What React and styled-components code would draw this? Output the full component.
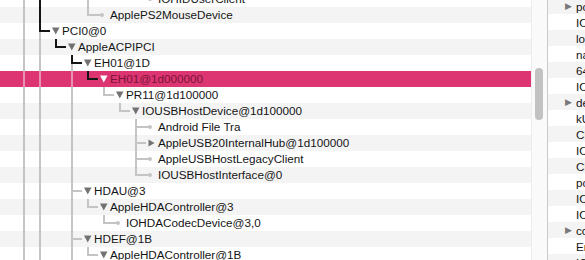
import React from "react";
import styled, { createGlobalStyle } from "styled-components";

const G = "#c4c4c4";
const K = "#151515";

const rows = [
  { level: 7, label: "IOHIDUserClient", kind: "leaf", pass: [[0, G], [1, K], [4, G]] },
  { level: 4, label: "ApplePS2MouseDevice", kind: "leaf", pass: [[0, G], [1, K]] },
  { level: 1, label: "PCI0@0", kind: "open", elbow: K, tail: G, pass: [[0, G]] },
  { level: 2, label: "AppleACPIPCI", kind: "open", elbow: K, pass: [[0, G], [1, G]] },
  { level: 3, label: "EH01@1D", kind: "open", elbow: K, tail: G, pass: [[0, G], [1, G]] },
  { level: 4, label: "EH01@1d000000", kind: "open", elbow: K, selected: true, pass: [[0, G], [1, G], [3, G]] },
  { level: 5, label: "PR11@1d100000", kind: "open", pass: [[0, G], [1, G], [3, G]] },
  { level: 6, label: "IOUSBHostDevice@1d100000", kind: "open", pass: [[0, G], [1, G], [3, G]] },
  { level: 7, label: "Android File Tra", kind: "leaf", tail: G, pass: [[0, G], [1, G], [3, G]] },
  { level: 7, label: "AppleUSB20InternalHub@1d100000", kind: "closed", tail: G, pass: [[0, G], [1, G], [3, G]] },
  { level: 7, label: "AppleUSBHostLegacyClient", kind: "leaf", tail: G, pass: [[0, G], [1, G], [3, G]] },
  { level: 7, label: "IOUSBHostInterface@0", kind: "leaf", pass: [[0, G], [1, G], [3, G]] },
  { level: 3, label: "HDAU@3", kind: "open", tail: G, pass: [[0, G], [1, G]] },
  { level: 4, label: "AppleHDAController@3", kind: "open", pass: [[0, G], [1, G], [3, G]] },
  { level: 5, label: "IOHDACodecDevice@3,0", kind: "leaf", pass: [[0, G], [1, G], [3, G]] },
  { level: 3, label: "HDEF@1B", kind: "open", tail: G, pass: [[0, G], [1, G]] },
  { level: 4, label: "AppleHDAController@1B", kind: "open", pass: [[0, G], [1, G], [3, G]] },
];

const props = [
  { label: "pool-size", group: true },
  { label: "IOClass" },
  { label: "locationID" },
  { label: "name" },
  { label: "64bit" },
  { label: "IOProviderClass" },
  { label: "device-properties", group: true },
  { label: "kUSBSleepPortCurrentLimit" },
  { label: "Class" },
  { label: "IOName" },
  { label: "ClassCode" },
  { label: "port-count" },
  { label: "IOPowerManagement" },
  { label: "IOGeneralInterest" },
  { label: "controller-statistics", group: true },
  { label: "Endpoints" },
  { label: "IOMatchCategory" },
];

const GlobalStyle = createGlobalStyle`
  html, body {
    margin: 0;
    padding: 0;
    background: #fff;
    overflow: hidden;
  }
  body {
    font-family: "Liberation Sans", Arial, sans-serif;
  }
`;

const Window = styled.div`
  display: flex;
  width: 585px;
  height: 260px;
  overflow: hidden;
  background: #fff;
`;

const Outline = styled.div`
  width: 531px;
  flex: none;
  overflow: hidden;
`;

const List = styled.div`
  margin-top: ${(p) => p.$offset}px;
`;

const TreeRow = styled.div`
  display: flex;
  align-items: center;
  height: 16px;
  background: ${(p) => (p.$selected ? "#dd3572" : p.$stripe ? "#f4f4f4" : "#fff")};
  color: ${(p) => (p.$selected ? "#7a1436" : "#141414")};
  font-size: 11.7px;
  white-space: nowrap;
`;

const Label = styled.span`
  line-height: 16px;
`;

const Scroller = styled.div`
  width: 16px;
  flex: none;
  background: #fafafa;
  border-left: 1px solid #ececec;
  box-sizing: border-box;
  padding: 68px 0 0 3px;
`;

const Thumb = styled.div`
  width: 8px;
  height: 52px;
  border-radius: 4px;
  background: #c2c2c2;
`;

const Inspector = styled.div`
  flex: 1;
  border-left: 1px solid #c9c9c9;
  overflow: hidden;
`;

const PropRow = styled.div`
  display: flex;
  align-items: center;
  height: 16px;
  padding-left: 17px;
  background: ${(p) => (p.$stripe ? "#f4f4f4" : "#fff")};
  color: #141414;
  font-size: 11.7px;
  white-space: nowrap;
`;

const Disclosure = styled.span`
  width: 11px;
  flex: none;
  color: #7a7a7a;
  font-size: 9px;
`;

const lx = (l) => 24 + 16 * l;

function Guides({ row }) {
  const { level, kind, pass, elbow = G, tail, selected } = row;
  const x = lx(level);
  const width = x + 22;
  const soft = (c) => (selected && c === G ? "rgba(255,255,255,0.45)" : c);
  const arm = kind === "leaf" ? 13 : 10;
  const tri = selected ? "#fff" : "#727272";
  return (
    <svg width={width} height="16" style={{ flex: "none" }}>
      {pass.map(([l, c]) => (
        <rect key={l} x={lx(l) - 1} y="0" width="2" height="16" fill={soft(c)} />
      ))}
      {tail && <rect x={x - 1} y="8" width="2" height="8" fill={soft(tail)} />}
      <rect x={x - 1} y="0" width="2" height="9" fill={elbow} />
      <rect x={x - 1} y="7" width={arm + 1} height="2" fill={elbow} />
      {kind === "leaf" && <circle cx={x + 14} cy="8" r="2" fill={elbow} />}
      {kind === "open" && (
        <polygon points={`${x + 12},4.5 ${x + 19.5},4.5 ${x + 15.75},11.5`} fill={tri} />
      )}
      {kind === "closed" && (
        <polygon points={`${x + 12.5},4.5 ${x + 18.5},8 ${x + 12.5},11.5`} fill={tri} />
      )}
    </svg>
  );
}

export default function App() {
  return (
    <>
      <GlobalStyle />
      <Window>
        <Outline>
          <List $offset={-9}>
            {rows.map((row, i) => (
              <TreeRow key={i} $stripe={i % 2 === 1} $selected={row.selected}>
                <Guides row={row} />
                <Label>{row.label}</Label>
              </TreeRow>
            ))}
          </List>
        </Outline>
        <Scroller>
          <Thumb />
        </Scroller>
        <Inspector>
          <List $offset={-2}>
            {props.map((p, i) => (
              <PropRow key={i} $stripe={i % 2 === 0}>
                <Disclosure>{p.group ? "▶" : ""}</Disclosure>
                {p.label}
              </PropRow>
            ))}
          </List>
        </Inspector>
      </Window>
    </>
  );
}
